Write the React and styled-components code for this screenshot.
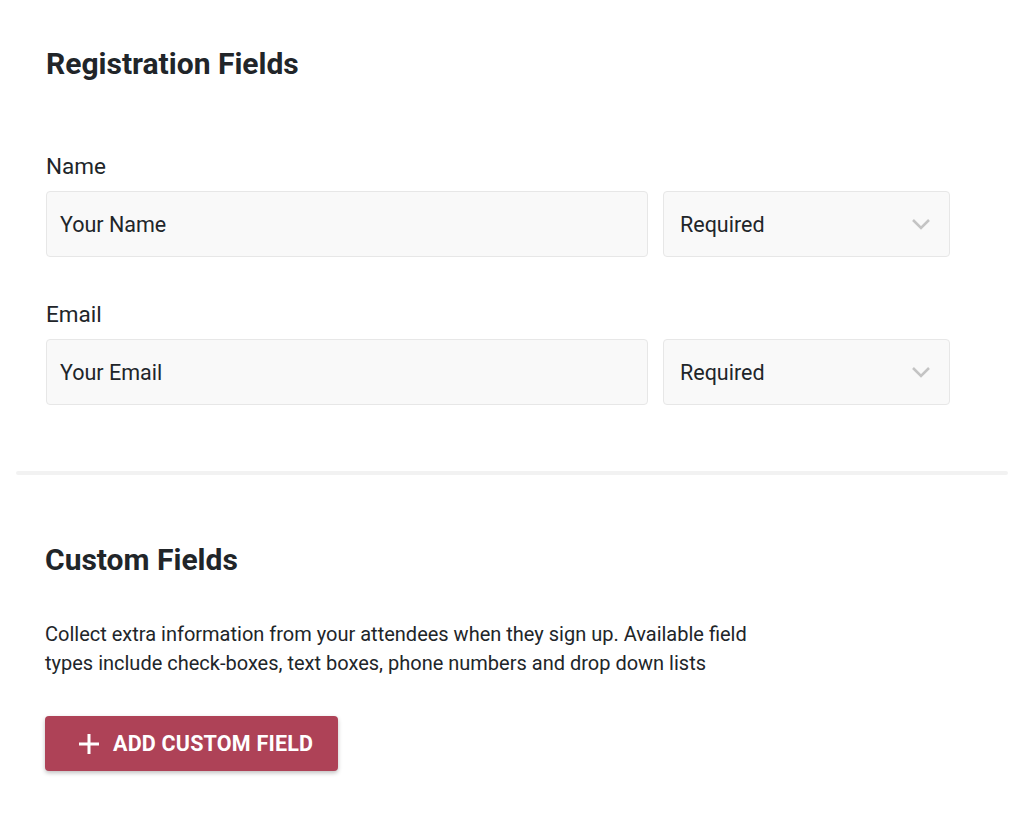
import React from 'react';
import styled, { createGlobalStyle } from 'styled-components';

const GlobalStyle = createGlobalStyle`
  body {
    margin: 0;
    background: #fff;
    font-family: Roboto, "Liberation Sans", sans-serif;
    color: #212529;
  }
`;

const Page = styled.div`
  width: 1024px;
  min-height: 816px;
  background: #fff;
`;

const Section = styled.section`
  padding: ${(p) => p.$pad};
  background: ${(p) => p.$bg || '#fff'};
`;

const Heading = styled.h2`
  margin: 0;
  font-size: 30px;
  font-weight: 700;
  line-height: 36px;
  color: #212529;
`;

const FieldGroup = styled.div`
  margin-top: ${(p) => p.$top}px;
`;

const Label = styled.div`
  font-size: 22.5px;
  line-height: 26px;
  margin-bottom: 12px;
`;

const Row = styled.div`
  display: flex;
  gap: 15px;
`;

const Box = styled.div`
  box-sizing: border-box;
  height: 66px;
  width: ${(p) => p.$w}px;
  background: #f9f9f9;
  border: 1px solid #e7e7e7;
  border-radius: 4px;
  display: flex;
  align-items: center;
  justify-content: space-between;
  padding: 0 18px 0 13px;
  font-size: 21.5px;
  color: #212529;
`;

const SelectBox = styled(Box)`
  padding: 0 18px 0 16px;
`;

const Divider = styled.div`
  margin: 0 16px;
  height: 4px;
  border-radius: 2px;
  background: #f2f2f2;
`;

const Text = styled.p`
  margin: 42px 0 0;
  width: 735px;
  font-size: 20px;
  line-height: 29px;
  color: #212529;
`;

const Button = styled.button`
  margin-top: 38px;
  display: inline-flex;
  align-items: center;
  gap: 13px;
  height: 55px;
  padding: 0 25px 0 33px;
  border: none;
  border-radius: 4px;
  background: #ae4257;
  color: #fff;
  font-family: Roboto, "Liberation Sans", sans-serif;
  font-size: 21.5px;
  font-weight: 700;
  letter-spacing: 0.2px;
  box-shadow: 0 2px 4px rgba(0, 0, 0, 0.25);
`;

const Chevron = () => (
  <svg width="20" height="12" viewBox="0 0 20 12">
    <path d="M2 2l8 8 8-8" fill="none" stroke="#c4c4c4" strokeWidth="2.5" />
  </svg>
);

const Plus = () => (
  <svg width="22" height="22" viewBox="0 0 22 22">
    <path d="M11 1v20M1 11h20" stroke="#fff" strokeWidth="3" />
  </svg>
);

const Field = ({ label, placeholder, top }) => (
  <FieldGroup $top={top}>
    <Label>{label}</Label>
    <Row>
      <Box $w={602}>{placeholder}</Box>
      <SelectBox $w={287}>
        Required
        <Chevron />
      </SelectBox>
    </Row>
  </FieldGroup>
);

const App = () => (
  <Page>
    <GlobalStyle />
    <Section $pad="46px 46px 66px">
      <Heading>Registration Fields</Heading>
      <Field label="Name" placeholder="Your Name" top={71} />
      <Field label="Email" placeholder="Your Email" top={44} />
    </Section>
    <Divider />
    <Section $pad="67px 46px 46px 45px">
      <Heading>Custom Fields</Heading>
      <Text>
        Collect extra information from your attendees when they sign up. Available field
        types include check-boxes, text boxes, phone numbers and drop down lists
      </Text>
      <Button>
        <Plus />
        ADD CUSTOM FIELD
      </Button>
    </Section>
  </Page>
);

export default App;
